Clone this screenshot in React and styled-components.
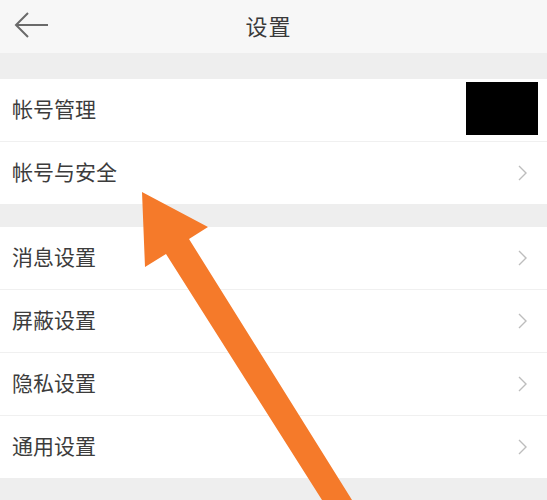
import React from 'react';
import styled, { createGlobalStyle } from 'styled-components';

const Global = createGlobalStyle`
  html, body {
    margin: 0;
    padding: 0;
    background: #eeeeee;
  }
  body {
    font-family: "Noto Sans CJK SC", "Noto Sans", sans-serif;
  }
`

const Screen = styled.div`
  position: relative;
  width: 547px;
  height: 500px;
  overflow: hidden;
  background: #eeeeee;
`

const Header = styled.div`
  height: 53px;
  background: #f7f7f7;
  display: flex;
  align-items: center;
  justify-content: center;
  position: relative;
`

const BackButton = styled.div`
  position: absolute;
  left: 14px;
  top: 11px;
  width: 36px;
  height: 28px;
  display: flex;
`

const Title = styled.div`
  font-size: 22px;
  line-height: 1;
  color: #3a3a3a;
  letter-spacing: 1px;
  margin-right: 10px;
  padding-bottom: 4px;
`

const Group = styled.div`
  margin-top: ${p => p.gap}px;
  background: #ffffff;
  display: flex;
  flex-direction: column;
`

const Row = styled.div`
  height: 62px;
  display: flex;
  align-items: center;
  justify-content: space-between;
  padding: 0 20px 0 12px;
  border-top: ${p => (p.first ? 'none' : '1px solid #f0f0f0')};
`

const Label = styled.span`
  font-size: 21px;
  line-height: 1;
  color: #3c3c3c;
  padding-bottom: 3px;
`

const Chevron = styled.svg`
  width: 9px;
  height: 16px;
`

const Blackout = styled.div`
  width: 72px;
  height: 53px;
  background: #000;
  margin-right: -11px;
  margin-top: -3px;
`

const Pointer = styled.svg`
  position: absolute;
  left: 0;
  top: 0;
  width: 547px;
  height: 500px;
  pointer-events: none;
`

const Arrow = () => (
  <svg width="36" height="28" viewBox="0 0 36 28">
    <path d="M34 14 H2 M14 2 L2 14 L14 26" fill="none" stroke="#6a6a6a" strokeWidth="2" />
  </svg>
)

const Next = () => (
  <Chevron viewBox="0 0 9 16">
    <path d="M1 1 L8 8 L1 15" fill="none" stroke="#bdbdbd" strokeWidth="1.4" />
  </Chevron>
)

const groups = [
  { gap: 26, items: ['帐号管理', '帐号与安全'] },
  { gap: 23, items: ['消息设置', '屏蔽设置', '隐私设置', '通用设置'] },
]

export default function App() {
  return (
    <Screen>
      <Global />
      <Header>
        <BackButton><Arrow /></BackButton>
        <Title>设置</Title>
      </Header>
      {groups.map((g, gi) => (
        <Group key={gi} gap={g.gap}>
          {g.items.map((name, i) => (
            <Row key={name} first={i === 0}>
              <Label>{name}</Label>
              {gi === 0 && i === 0 ? <Blackout /> : <Next />}
            </Row>
          ))}
        </Group>
      ))}
      <Pointer viewBox="0 0 547 500">
        <polygon
          points="142,192 208,227 189,239 352,500 322,500 166,254 145,267"
          fill="#f57a2a"
        />
      </Pointer>
    </Screen>
  )
}
